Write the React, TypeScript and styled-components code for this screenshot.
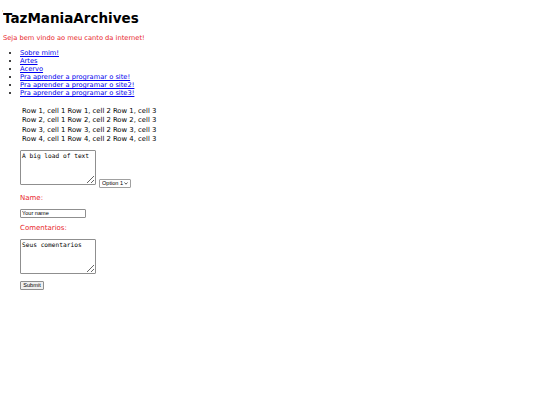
import React from "react";
import styled, { createGlobalStyle } from "styled-components";

const GlobalStyle = createGlobalStyle`
  body {
    margin: 3px;
    background: #ffffff;
    font-family: "DejaVu Sans", Verdana, sans-serif;
    font-size: 6.7px;
    color: #000000;
  }
`;

const Title = styled.h1`
  font-size: 13.5px;
  font-weight: bold;
  margin: 7px 0 7px;
  line-height: 16px;
`;

const Welcome = styled.p`
  color: #e8262b;
  margin: 0 0 6px;
  line-height: 10px;
`;

const Links = styled.ul`
  margin: 0;
  padding-left: 17px;
  line-height: 8px;

  a {
    color: #0000ee;
  }
`;

const Section = styled.div`
  padding-left: 17px;
`;

const Table = styled.table`
  margin: 10px 0 5px;
  font-size: 6.85px;
  border-spacing: 2px 0;
  line-height: 9.4px;

  td {
    padding: 0;
  }
`;

const Controls = styled.div`
  margin-bottom: 3px;
`;

const TextBox = styled.textarea`
  width: 72px;
  height: 31px;
  font-family: "DejaVu Sans Mono", monospace;
  font-size: 6.2px;
  padding: 1px;
  margin: 0;
  border: 1px solid #8f8f8f;
  border-radius: 1px;
  resize: both;
  vertical-align: bottom;
`;

const SelectWrap = styled.span`
  position: relative;
  display: inline-block;
  margin-left: 3px;
  vertical-align: bottom;
  margin-bottom: -3px;

  svg {
    position: absolute;
    right: 3px;
    top: 3px;
    pointer-events: none;
  }
`;

const Select = styled.select`
  appearance: none;
  font-family: "Liberation Sans", Arial, sans-serif;
  font-size: 5.6px;
  height: 9px;
  width: 32px;
  margin: 0;
  padding: 0 0 0 2px;
  border: 1px solid #a0a0a0;
  border-radius: 1px;
  background: #ffffff;
  color: #000000;
  display: block;
`;

const Form = styled.form`
  display: flex;
  flex-direction: column;
  align-items: flex-start;
`;

const Label = styled.label`
  color: #e8262b;
  font-size: 7px;
  line-height: 8px;
  margin: 6px 0 7px;
`;

const TextInput = styled.input`
  width: 62px;
  height: 7px;
  font-family: "Liberation Sans", Arial, sans-serif;
  font-size: 5.6px;
  padding: 0 1px;
  border: 1px solid #8f8f8f;
  border-radius: 1px;
  margin: 0;
`;

const Submit = styled.button`
  font-family: "Liberation Sans", Arial, sans-serif;
  font-size: 5.6px;
  width: 24px;
  height: 9px;
  padding: 0;
  margin-top: 7px;
  border: 1px solid #8f8f8f;
  border-radius: 1px;
  background: #efefef;
  color: #000000;
`;

const links = [
  "Sobre mim!",
  "Artes",
  "Acervo",
  "Pra aprender a programar o site!",
  "Pra aprender a programar o site2!",
  "Pra aprender a programar o site3!",
];

const App = () => {
  const rows = [1, 2, 3, 4];
  return (
    <>
      <GlobalStyle />
      <Title>TazManiaArchives</Title>
      <Welcome>Seja bem vindo ao meu canto da internet!</Welcome>
      <Links>
        {links.map((l) => (
          <li key={l}>
            <a href="#">{l}</a>
          </li>
        ))}
      </Links>
      <Section>
        <Table>
          <tbody>
            {rows.map((r) => (
              <tr key={r}>
                <td>Row {r}, cell 1</td>
                <td>Row {r}, cell 2</td>
                <td>Row {r}, cell 3</td>
              </tr>
            ))}
          </tbody>
        </Table>
        <Controls>
          <TextBox defaultValue="A big load of text" />
          <SelectWrap>
            <Select defaultValue="1">
              <option value="1">Option 1</option>
              <option value="2">Option 2</option>
            </Select>
            <svg width="4" height="3" viewBox="0 0 4 3">
              <path d="M0.5 0.5 L2 2.2 L3.5 0.5" fill="none" stroke="#333" strokeWidth="0.8" />
            </svg>
          </SelectWrap>
        </Controls>
        <Form onSubmit={(e) => e.preventDefault()}>
          <Label htmlFor="name">Name:</Label>
          <TextInput id="name" defaultValue="Your name" />
          <Label htmlFor="comments">Comentarios:</Label>
          <TextBox id="comments" defaultValue="Seus comentarios" />
          <Submit type="submit">Submit</Submit>
        </Form>
      </Section>
    </>
  );
};

export default App;
